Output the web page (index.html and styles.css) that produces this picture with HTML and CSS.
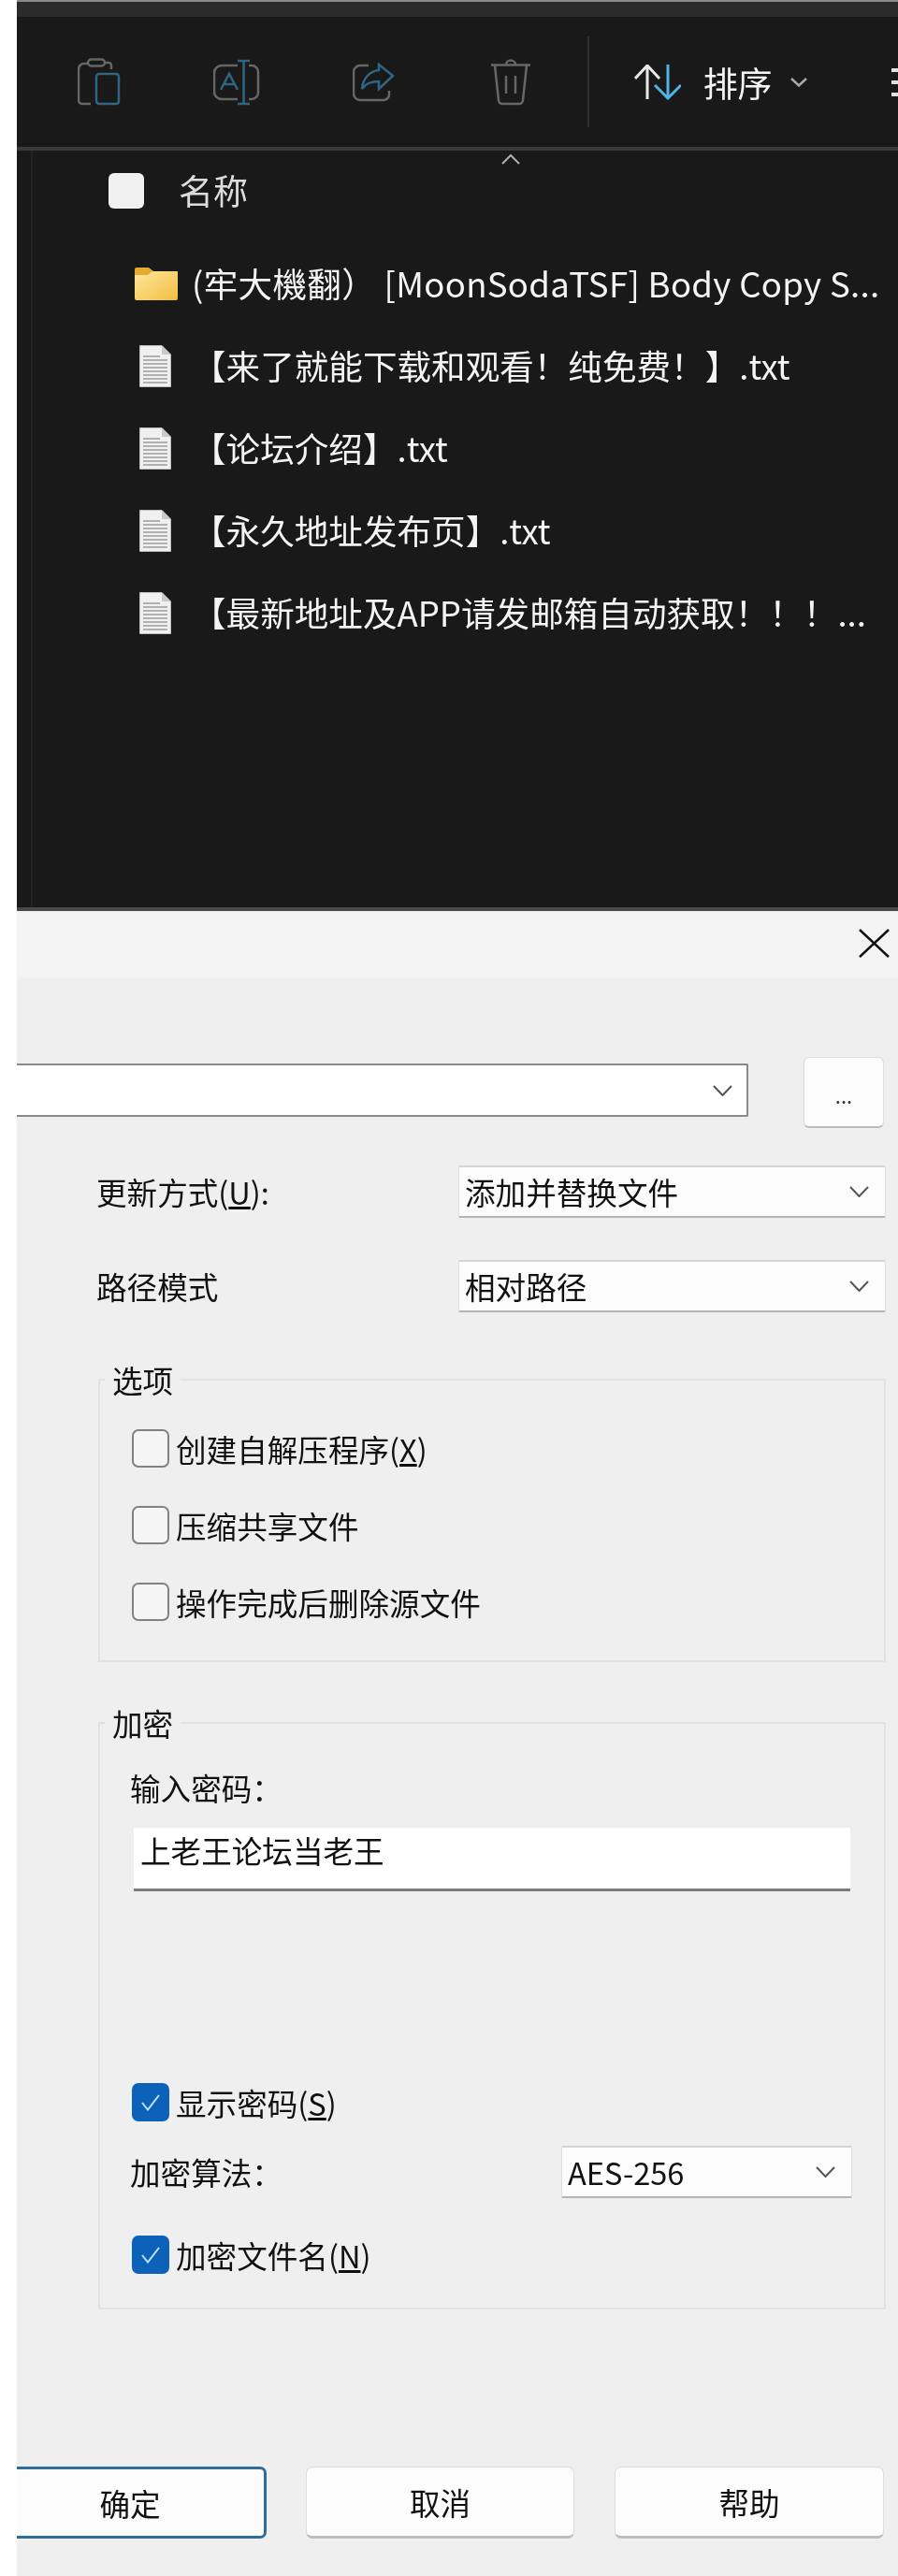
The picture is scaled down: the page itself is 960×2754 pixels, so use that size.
FILE: index.html
```html
<!DOCTYPE html>
<html lang="zh-CN">
<head>
<meta charset="utf-8">
<title>压缩文件</title>
<link rel="stylesheet" href="styles.css">
</head>
<body>
<div class="page">
  <section class="explorer">
    <div class="tabstrip"></div>
    <div class="toolbar">
      <div class="tool">
        <svg class="ico" width="46" height="52" viewBox="0 0 46 52"><path class="g" d="M10 6H7a6 6 0 0 0-6 6V45a4 4 0 0 0 4 4H14"/><rect class="g" x="11" y="1.500" width="18" height="7" rx="3.500"/><path class="g" d="M29 5H33a3 3 0 0 1 3 3V12"/><rect class="b" x="20" y="17" width="24" height="32" rx="3"/></svg>
      </div>
      <div class="tool">
        <svg class="ico" width="50" height="50" viewBox="0 0 50 50"><path class="g" d="M26 7H9a8 8 0 0 0-8 8V35a8 8 0 0 0 8 8H26"/><path class="g" d="M38 7H41a7 7 0 0 1 7 7V36a7 7 0 0 1-7 7H38"/><path class="b" d="M32.500 2V48M26 2H39M26 48H39M8 33L17 16L26 33M11.500 27H22.500"/></svg>
      </div>
      <div class="tool">
        <svg class="ico" width="45" height="42" viewBox="0 0 45 42"><path class="g" d="M17 3H8a7 7 0 0 0-7 7V33a7 7 0 0 0 7 7H33a6 6 0 0 0 6-6V30"/><path class="b" d="M28 2L43 14L28 28V20C20 20 14 22 10 28C11 16 19 9 28 8Z"/></svg>
      </div>
      <div class="tool">
        <svg class="ico" width="44" height="50" viewBox="0 0 44 50"><path class="g" d="M1 6.500H43M17 6a5 4.500 0 0 1 10 0M5 7L9 44a4 4 0 0 0 4 4H31a4 4 0 0 0 4-4L39 7M17 18V37M27 18V37"/></svg>
      </div>
      <div class="tool-sep"></div>
      <div class="sort">
        <svg class="sort-ico" width="50" height="38" viewBox="0 0 50 38"><path class="w" d="M14 37V1M1 15L14 1L27 15"/><path class="l" d="M36 0V36M22 22L36 36L50 22"/></svg>
        <span class="sort-label">排序</span>
        <svg class="sort-caret" width="18" height="10" viewBox="0 0 18 10"><path d="M1 1L9 8.500L17 1"/></svg>
      </div>
      <div class="menu-ico"><i></i><i></i><i></i></div>
    </div>
    <div class="listing">
      <svg class="collapse" width="20" height="11" viewBox="0 0 20 11"><path d="M1 10L10 1L19 10"/></svg>
      <div class="list-head">
        <span class="head-check"></span>
        <span class="head-name">名称</span>
      </div>
      <div class="rows">
        <div class="row">
          <svg class="folder" width="46" height="35" viewBox="0 0 46 35"><defs><linearGradient id="fg" x1="0" y1="0" x2="1" y2="1"><stop offset="0" stop-color="#fde79c"/><stop offset="1" stop-color="#f5bd41"/></linearGradient></defs><path fill="#e3ab32" d="M0 2a2 2 0 0 1 2-2H15l5 4H46V12H0Z"/><path fill="url(#fg)" d="M0 8H14L19 4H44a2 2 0 0 1 2 2V33a2 2 0 0 1-2 2H2a2 2 0 0 1-2-2Z"/></svg>
          <span class="name name-folder">(牢大機翻） [MoonSodaTSF] Body Copy S...</span>
        </div>
        <div class="row">
          <svg class="file" width="34" height="45" viewBox="0 0 34 45"><use href="#doc"/></svg>
          <span class="name name-txt">【来了就能下载和观看！纯免费！】.txt</span>
        </div>
        <div class="row">
          <svg class="file" width="34" height="45" viewBox="0 0 34 45"><use href="#doc"/></svg>
          <span class="name name-txt">【论坛介绍】.txt</span>
        </div>
        <div class="row">
          <svg class="file" width="34" height="45" viewBox="0 0 34 45"><use href="#doc"/></svg>
          <span class="name name-txt">【永久地址发布页】.txt</span>
        </div>
        <div class="row">
          <svg class="file" width="34" height="45" viewBox="0 0 34 45"><use href="#doc"/></svg>
          <span class="name name-txt">【最新地址及APP请发邮箱自动获取！！！...</span>
        </div>
      </div>
    </div>
  </section>
  <section class="dialog">
    <div class="titlebar">
      <svg class="close" width="33" height="31" viewBox="0 0 33 31"><path d="M1 1L32 30M32 1L1 30"/></svg>
    </div>
    <div class="body">
      <div class="path-row">
        <div class="combo"><svg class="chev" width="21" height="12" viewBox="0 0 21 12"><path d="M1 1L10.500 11L20 1"/></svg></div>
        <div class="browse"><span>...</span></div>
      </div>
      <div class="field">
        <span class="label">更新方式(<u>U</u>):</span>
        <div class="select"><span>添加并替换文件</span><svg class="chev" width="21" height="12" viewBox="0 0 21 12"><path d="M1 1L10.500 11L20 1"/></svg></div>
      </div>
      <div class="field field-next">
        <span class="label">路径模式</span>
        <div class="select"><span>相对路径</span><svg class="chev" width="21" height="12" viewBox="0 0 21 12"><path d="M1 1L10.500 11L20 1"/></svg></div>
      </div>
      <div class="group group-options">
        <span class="legend">选项</span>
        <label class="check check-first"><span class="box"></span>创建自解压程序(<u>X</u>)</label>
        <label class="check check-gap"><span class="box"></span>压缩共享文件</label>
        <label class="check check-gap"><span class="box"></span>操作完成后删除源文件</label>
      </div>
      <div class="group group-crypt">
        <span class="legend">加密</span>
        <div class="pw-label">输入密码：</div>
        <div class="pw-input">上老王论坛当老王</div>
        <label class="check check-show"><span class="box on"><svg width="20" height="18" viewBox="0 0 20 18"><path d="M1 9L7 16.500L19 1"/></svg></span>显示密码(<u>S</u>)</label>
        <div class="algo">
          <span>加密算法：</span>
          <div class="select select-algo"><span>AES-256</span><svg class="chev" width="21" height="12" viewBox="0 0 21 12"><path d="M1 1L10.500 11L20 1"/></svg></div>
        </div>
        <label class="check check-names"><span class="box on"><svg width="20" height="18" viewBox="0 0 20 18"><path d="M1 9L7 16.500L19 1"/></svg></span>加密文件名(<u>N</u>)</label>
      </div>
      <div class="actions">
        <button class="btn btn-ok">确定</button>
        <button class="btn btn-cancel">取消</button>
        <button class="btn btn-help">帮助</button>
      </div>
    </div>
  </section>
</div>
<svg class="defs" width="0" height="0"><defs><g id="doc"><path fill="#f0f0f0" stroke="#bdbdbd" d="M.5.500H24L33.500 10V44.500H.5Z"/><path fill="#c9c9c9" d="M24 .5V10H33.500Z"/><path stroke="#9c9c9c" stroke-width="1.600" d="M4 12H22M4 16H30M4 20H30M4 24H30M4 28H30M4 32H30M4 36H30M4 40H30"/></g></defs></svg>
</body>
</html>
```
FILE: styles.css
```css
* { box-sizing: border-box; }
html, body { margin: 0; padding: 0; background: #fff; }
body {
  font-family: "Noto Sans CJK SC", "Noto Sans", sans-serif;
  overflow-x: hidden;
}
.page {
  padding-left: 18px;
  height: 2754px;
  display: flex;
  flex-direction: column;
  overflow: hidden;
  filter: blur(0.5px);
}
.defs { position: absolute; }

/* explorer */
.explorer {
  background: #191919;
  border-top: 2px solid #8a8a8a;
  border-bottom: 4px solid #4a4a4a;
  height: 974px;
  color: #f2f2f2;
  display: flex;
  flex-direction: column;
}
.tabstrip { height: 16px; flex: none; background: #2b2b2b; }
.toolbar {
  flex: none;
  display: flex;
  align-items: center;
  padding-left: 15px;
  border-bottom: 4px solid #3a3a3a;
  height: 143px;
  white-space: nowrap;
}
.tool { width: 146.670px; flex: none; display: flex; justify-content: center; }
.ico { fill: none; stroke-width: 2.500; display: block; }
.ico .g { stroke: #666; fill: none; }
.ico .b { stroke: #2f6482; fill: none; }
.tool-sep { flex: none; width: 2px; height: 97px; margin-left: 8px; background: #2f2f2f; }
.sort { flex: none; display: flex; align-items: center; margin-left: 48px; }
.sort-ico { fill: none; stroke-width: 3; }
.sort-ico .w { stroke: #e8e8e8; fill: none; }
.sort-ico .l { stroke: #4fb3e6; fill: none; }
.sort-label { font-size: 37px; line-height: 44px; margin-left: 24px; color: #f5f5f5; }
.sort-caret { margin-left: 19px; fill: none; stroke: #a8a8a8; stroke-width: 2.500; }
.menu-ico { flex: none; margin-left: 90px; width: 20px; display: flex; flex-direction: column; gap: 9px; }
.menu-ico i { display: block; height: 4px; background: #e0e0e0; }

.listing {
  flex: 1;
  border-left: 2px solid #232323;
  margin-left: 15px;
  position: relative;
  padding-top: 24px;
}
.collapse { position: absolute; left: 501px; top: 4px; fill: none; stroke: #b0b0b0; stroke-width: 2; }
.list-head { display: flex; align-items: center; height: 38px; padding-left: 81px; }
.head-check { width: 38px; height: 38px; border-radius: 6px; background: #f1f1f1; }
.head-name { margin: -3px 0 0 37px; font-size: 37px; line-height: 38px; color: #dcdcdc; }
.rows { margin-top: 54px; padding-left: 109px; }
.row { display: flex; align-items: center; height: 88px; }
.row:first-child { height: 52px; margin-bottom: 18px; }
.folder { flex: none; }
.file { flex: none; margin-left: 5px; }
.name { font-size: 36.600px; line-height: 52px; margin-left: 15px; white-space: nowrap; color: #f4f4f4; }
.name-folder { letter-spacing: 0.3px; }
.name-txt { margin-left: 22px; }

/* dialog */
.dialog { flex: 1; background: #efefef; color: #111; font-size: 32.600px; line-height: 36px; }
.titlebar {
  height: 71px;
  background: #f3f3f3;
  display: flex;
  justify-content: flex-end;
  align-items: center;
  padding: 0 9px 3px 0;
}
.close { fill: none; stroke: #111; stroke-width: 2.500; }
.body { padding: 85px 13px 0 0; }
.chev { fill: none; stroke: #555; stroke-width: 2; flex: none; }
.path-row { display: flex; align-items: center; }
.combo {
  width: 782px;
  height: 57px;
  margin-bottom: 5px;
  background: #fff;
  border: 2px solid #8a8a8a;
  border-left: 0;
  border-radius: 0 2px 2px 0;
  display: flex;
  align-items: center;
  justify-content: flex-end;
  padding-right: 15px;
}
.browse {
  margin-left: 59px;
  width: 86px;
  height: 76px;
  background: #fcfcfc;
  border: 1px solid #dcdcdc;
  border-bottom: 2px solid #bdbdbd;
  border-radius: 6px;
  display: flex;
  align-items: flex-end;
  justify-content: center;
  font-size: 22px;
  line-height: 40px;
  color: #333;
  padding-bottom: 14px;
}
.field { display: flex; align-items: center; justify-content: space-between; margin-top: 40px; padding-left: 85px; }
.field-next { margin-top: 45px; }
.label { white-space: nowrap; }
.select {
  width: 457px;
  height: 56px;
  flex: none;
  background: #fcfcfc;
  border: 1px solid #dedede;
  border-top: 2px solid #d4d4d4;
  border-bottom: 2px solid #b4b4b4;
  border-radius: 2px;
  display: flex;
  align-items: center;
  justify-content: space-between;
  padding: 0 17px 0 6px;
  white-space: nowrap;
}
.group {
  margin-left: 87px;
  border: 2px solid #e2e2e2;
  padding: 0 34px;
}
.group-options { margin-top: 71px; padding-bottom: 42px; }
.group-crypt { margin-top: 64px; padding-bottom: 36px; }
.legend {
  display: block;
  width: fit-content;
  margin: -18px 0 0 -29px;
  padding: 0 8px;
  background: #efefef;
  line-height: 33px;
}
.group .check-first { margin-top: 37px; }
.check { display: flex; align-items: center; height: 41px; white-space: nowrap; }
.check-gap { margin-top: 41px; }
.box {
  flex: none;
  width: 40px;
  height: 41px;
  margin-right: 7px;
  border: 2px solid #828282;
  border-radius: 7px;
  background: #f5f5f5;
  display: flex;
  align-items: center;
  justify-content: center;
}
.box.on { background: #0b62b8; border-color: #0b62b8; }
.box svg { fill: none; stroke: #bfe6ff; stroke-width: 2; }
.pw-label { margin: 35px 0 0 -2px; }
.pw-input {
  margin: 25px 0 0 2px;
  width: 766px;
  height: 68px;
  background: #fff;
  border-bottom: 3px solid #7c7c7c;
  padding: 7px 0 0 7px;
  line-height: 33px;
}
.check-show { margin-top: 205px; }
.algo { display: flex; align-items: center; justify-content: space-between; margin: 26px 0 0 -2px; width: 772px; white-space: nowrap; }
.select-algo { width: 311px; height: 56px; }
.check-names { margin-top: 40px; }
.actions { display: flex; gap: 42px; margin: 168px 2px 0 0; }
.btn {
  font: inherit;
  color: #111;
  height: 77px;
  padding: 0;
  background: #fcfcfc;
  border: 1px solid #dcdcdc;
  border-bottom: 3px solid #bdbdbd;
  border-radius: 7px;
  flex: none;
}
.btn-ok { width: 267px; border: 3px solid #2f6d9a; border-left: 0; border-radius: 0 7px 7px 0; padding-right: 22px; }
.btn-cancel { width: 287px; }
.btn-help { width: 288px; margin-left: 1px; }
```
